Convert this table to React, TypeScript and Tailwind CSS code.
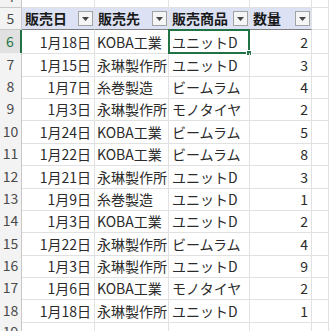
import React from 'react'

type Row = { n: number; date: string; dest: string; item: string; qty: number }

const rows: Row[] = [
  { n: 6, date: '1月18日', dest: 'KOBA工業', item: 'ユニットD', qty: 2 },
  { n: 7, date: '1月15日', dest: '永琳製作所', item: 'ユニットD', qty: 3 },
  { n: 8, date: '1月7日', dest: '糸巻製造', item: 'ビームラム', qty: 4 },
  { n: 9, date: '1月3日', dest: '永琳製作所', item: 'モノタイヤ', qty: 2 },
  { n: 10, date: '1月24日', dest: 'KOBA工業', item: 'ビームラム', qty: 5 },
  { n: 11, date: '1月22日', dest: 'KOBA工業', item: 'ビームラム', qty: 8 },
  { n: 12, date: '1月21日', dest: '永琳製作所', item: 'ユニットD', qty: 3 },
  { n: 13, date: '1月9日', dest: '糸巻製造', item: 'ユニットD', qty: 1 },
  { n: 14, date: '1月3日', dest: 'KOBA工業', item: 'ユニットD', qty: 2 },
  { n: 15, date: '1月22日', dest: '永琳製作所', item: 'ビームラム', qty: 4 },
  { n: 16, date: '1月3日', dest: '永琳製作所', item: 'ユニットD', qty: 9 },
  { n: 17, date: '1月6日', dest: 'KOBA工業', item: 'モノタイヤ', qty: 2 },
  { n: 18, date: '1月18日', dest: '永琳製作所', item: 'ユニットD', qty: 1 },
]

const grid = 'grid grid-cols-[22px_73px_74px_81px_62px_1fr] h-[22.36px]'
const cell = 'border-r border-b border-[#e1e1e1] flex items-center overflow-hidden whitespace-nowrap pt-[2px]'
const rowHead = 'border-r border-b border-[#c8c8c8] bg-[#f3f3f3] flex items-center justify-center text-[#4a4a4a] text-[14px]'

function FilterButton() {
  return (
    <div className="w-[15px] h-[15px] border border-[#a3a3a3] bg-[#f5f5f5] flex items-center justify-center mr-[1px] shrink-0">
      <svg width="7" height="4" viewBox="0 0 7 4">
        <path d="M0 0h7L3.5 4z" fill="#444" />
      </svg>
    </div>
  )
}

function Blank({ n }: { n: number }) {
  return (
    <div className={grid}>
      <div className={rowHead}>{n}</div>
      <div className={cell} />
      <div className={cell} />
      <div className={cell} />
      <div className={cell} />
      <div className={cell} />
    </div>
  )
}

export default function App() {
  const head = 'border-r border-b border-r-[#e1e1e1] border-b-[#7f7f7f] bg-[#dce2f3] flex items-center justify-between pl-[3px] font-bold text-[#1a1a1a]'
  return (
    <div
      className="w-[329px] h-[331px] overflow-hidden bg-white text-[14px] text-[#2b2b2b]"
      style={{ fontFamily: '"Noto Sans CJK JP", "Noto Sans", sans-serif' }}
    >
      <div className="-mt-[14.36px]">
        <Blank n={4} />
        <div className={grid}>
          <div className={rowHead}>5</div>
          <div className={head}>
            <span>販売日</span>
            <FilterButton />
          </div>
          <div className={head}>
            <span>販売先</span>
            <FilterButton />
          </div>
          <div className={head}>
            <span>販売商品</span>
            <FilterButton />
          </div>
          <div className={head}>
            <span>数量</span>
            <FilterButton />
          </div>
          <div className={cell} />
        </div>
        {rows.map((r) => {
          const active = r.n === 6
          return (
            <div key={r.n} className={grid}>
              <div
                className={
                  active
                    ? 'border-r-2 border-b border-r-[#217346] border-b-[#c8c8c8] bg-[#e1e1e1] flex items-center justify-center text-[#217346] text-[14px]'
                    : rowHead
                }
              >
                {r.n}
              </div>
              <div className={`${cell} justify-end pr-[3px]`}>{r.date}</div>
              <div className={`${cell} pl-[2px]`}>{r.dest}</div>
              <div className={`${cell} pl-[3px] relative overflow-visible`}>
                {r.item}
                {active && (
                  <div className="absolute -left-[1px] -top-[1px] -right-[1px] -bottom-[1px] border-2 border-[#217346]">
                    <div className="absolute -right-[4px] -bottom-[4px] w-[6px] h-[6px] bg-[#217346] border border-white" />
                  </div>
                )}
              </div>
              <div className={`${cell} justify-end pr-[3px]`}>{r.qty}</div>
              <div className={cell} />
            </div>
          )
        })}
        <Blank n={19} />
      </div>
    </div>
  )
}
